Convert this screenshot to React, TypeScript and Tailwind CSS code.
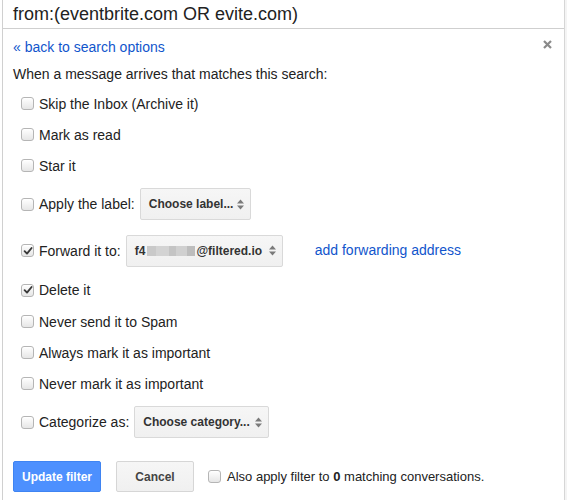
import React from "react";

function Box({ checked }: { checked?: boolean }) {
  return (
    <span className="w-[13px] h-[13px] rounded-[3px] border border-[#b5b5b5] bg-linear-to-b from-white to-[#e6e6e6] flex items-center justify-center shrink-0 shadow-[inset_0_1px_0_rgba(255,255,255,0.8)]">
      {checked && (
        <svg width="10" height="10" viewBox="0 0 10 10">
          <path d="M1.6 5.2 L4 7.6 L8.6 2" fill="none" stroke="#3a3a3a" strokeWidth="1.9" strokeLinecap="round" strokeLinejoin="round" />
        </svg>
      )}
    </span>
  );
}

function Arrows() {
  return (
    <svg width="7" height="11" viewBox="0 0 7 11" className="shrink-0 ml-[4px]">
      <polygon points="0,4.5 3.5,0.5 7,4.5" fill="#7a7a7a" />
      <polygon points="0,6.5 3.5,10.5 7,6.5" fill="#7a7a7a" />
    </svg>
  );
}

function Select({ children, w }: { children: React.ReactNode; w: string }) {
  return (
    <div className={`${w} h-[32px] rounded-[2px] border border-[#d9d9d9] bg-linear-to-b from-[#f6f6f6] to-[#f0f0f0] flex items-center justify-between pl-[8px] pr-[6px] text-[12px] font-bold text-[#333]`}>
      <span className="flex items-center whitespace-nowrap">{children}</span>
      <Arrows />
    </div>
  );
}

function Row({ h, checked, label, children }: { h: string; checked?: boolean; label: string; children?: React.ReactNode }) {
  return (
    <div className={`${h} flex items-center pl-[8px]`}>
      <Box checked={checked} />
      <span className="ml-[5px] text-[14px] text-[#222] leading-[18px]">{label}</span>
      {children}
    </div>
  );
}

export default function App() {
  return (
    <div className="relative w-[567px] h-[500px] overflow-hidden bg-white font-['Liberation_Sans',Arial,Helvetica,sans-serif]">
      <div className="absolute right-0 top-0 w-[3px] h-[500px] bg-[#f4f4f4] border-l border-[#d6d6d6]" />
      <div className="ml-[2px] w-[563px] h-[500px] border-x border-[#d0d0d0] flex flex-col">
        <div className="h-[29px] border-b border-[#cfcfcf] flex items-center pl-[10px] text-[18px] text-[#222] leading-[22px]">
          from:(eventbrite.com OR evite.com)
        </div>
        <div className="relative flex flex-col pl-[10px]">
          <svg width="9" height="9" viewBox="0 0 9 9" className="absolute right-[12px] top-[11px]">
            <path d="M1 1 L8 8 M8 1 L1 8" stroke="#8a8a8a" strokeWidth="2.2" />
          </svg>
          <div className="mt-[9px] h-[18px] leading-[18px] text-[14px] text-[#1155cc]">« back to search options</div>
          <div className="mt-[9px] h-[18px] leading-[18px] text-[14px] text-[#222]">When a message arrives that matches this search:</div>
          <div className="h-[5px]" />
          <Row h="h-[31px]" label="Skip the Inbox (Archive it)" />
          <Row h="h-[31px]" label="Mark as read" />
          <Row h="h-[31px]" label="Star it" />
          <Row h="h-[46px]" label="Apply the label:">
            <div className="ml-[5px]">
              <Select w="w-[111px]">Choose label...</Select>
            </div>
          </Row>
          <Row h="h-[47px]" checked label="Forward it to:">
            <div className="ml-[5px]">
              <Select w="w-[157px]">
                f4
                <span className="ml-[2px] mr-[1px] flex items-center blur-[0.6px]">
                  <span className="w-[9px] h-[10px] bg-[#c9c9c9]" />
                  <span className="w-[13px] h-[10px] bg-[#d3d3d3]" />
                  <span className="w-[7px] h-[10px] bg-[#c4c4c4]" />
                  <span className="w-[11px] h-[10px] bg-[#d0d0d0]" />
                  <span className="w-[8px] h-[10px] bg-[#bdbdbd]" />
                </span>
                @filtered.io
              </Select>
            </div>
            <span className="ml-[32px] text-[14px] text-[#1155cc]">add forwarding address</span>
          </Row>
          <Row h="h-[32px]" checked label="Delete it" />
          <Row h="h-[31px]" label="Never send it to Spam" />
          <Row h="h-[31px]" label="Always mark it as important" />
          <Row h="h-[31px]" label="Never mark it as important" />
          <Row h="h-[46px]" label="Categorize as:">
            <div className="ml-[5px]">
              <Select w="w-[135px]">Choose category...</Select>
            </div>
          </Row>
          <div className="mt-[16px] flex items-center">
            <div className="w-[88px] h-[31px] rounded-[2px] bg-[#4d90fe] border border-[#3f84f2] flex items-center justify-center text-[12px] font-bold text-white">
              Update filter
            </div>
            <div className="ml-[15px] w-[78px] h-[31px] rounded-[2px] bg-linear-to-b from-[#f6f6f6] to-[#f0f0f0] border border-[#d6d6d6] flex items-center justify-center text-[12px] font-bold text-[#444]">
              Cancel
            </div>
            <div className="ml-[14px] flex items-center">
              <Box />
              <span className="ml-[6px] text-[13px] text-[#222]">
                Also apply filter to <b>0</b> matching conversations.
              </span>
            </div>
          </div>
        </div>
      </div>
    </div>
  );
}
